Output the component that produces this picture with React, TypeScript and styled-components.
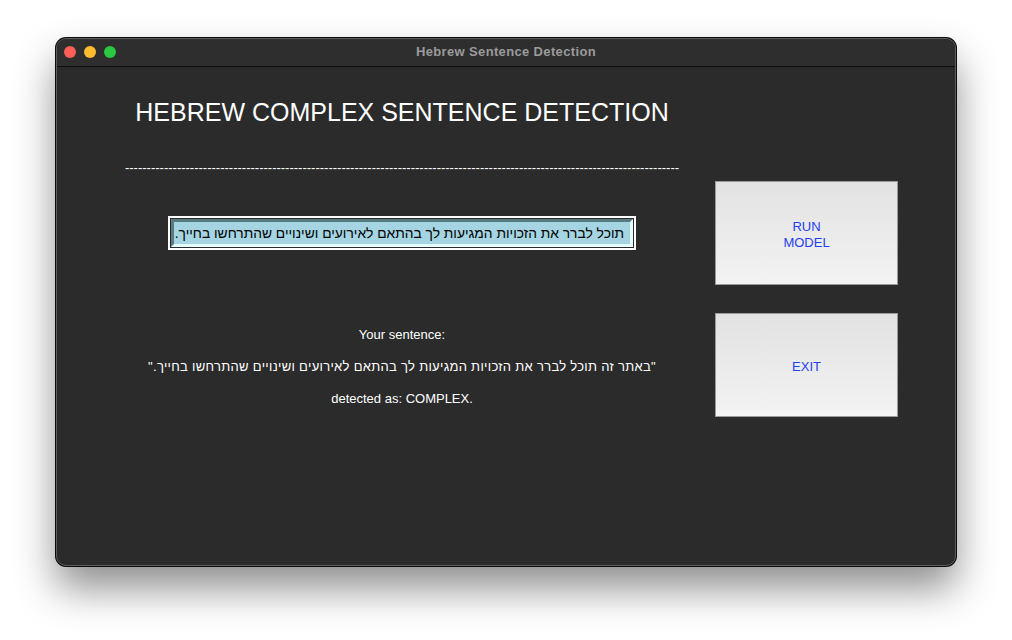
import React from "react";
import styled, { createGlobalStyle } from "styled-components";

const Global = createGlobalStyle`
  html, body { margin: 0; padding: 0; background: #ffffff; }
  body { font-family: "Liberation Sans", Arial, sans-serif; }
`;

const Page = styled.div`
  width: 1012px;
  height: 640px;
  box-sizing: border-box;
  padding: 38px 0 0 56px;
  background: #ffffff;
  overflow: hidden;
`;

const Window = styled.div`
  width: 900px;
  height: 528px;
  box-sizing: border-box;
  border-radius: 10px;
  background: #2b2b2b;
  border: 1px solid #5e5e5e;
  box-shadow: 0 0 0 1px #0a0a0a, 0 22px 40px rgba(0, 0, 0, 0.45);
  display: flex;
  flex-direction: column;
  overflow: hidden;
`;

const TitleBar = styled.div`
  height: 28px;
  box-sizing: border-box;
  padding-bottom: 3px;
  flex: none;
  background: #2e2e2e;
  border-bottom: 1px solid #0d0d0d;
  display: grid;
  grid-template-columns: 80px 1fr 80px;
  align-items: center;
`;

const Lights = styled.div`
  display: flex;
  gap: 8px;
  padding-left: 7px;
  padding-top: 2px;
`;

const Light = styled.span<{ $c: string }>`
  width: 12px;
  height: 12px;
  border-radius: 50%;
  background: ${(p) => p.$c};
`;

const TitleText = styled.div`
  text-align: center;
  color: #9b9b9b;
  font-weight: bold;
  font-size: 13px;
  letter-spacing: 0.35px;
`;

const Body = styled.div`
  flex: 1;
  display: grid;
  grid-template-columns: 600px 183px;
  column-gap: 13px;
  padding-left: 45px;
`;

const Main = styled.div`
  display: flex;
  flex-direction: column;
  align-items: center;
  padding-top: 31px;
`;

const Heading = styled.div`
  color: #ffffff;
  font-size: 25px;
  line-height: 28px;
  white-space: nowrap;
`;

const Rule = styled.div`
  margin-top: 34px;
  color: #ffffff;
  font-size: 13px;
  line-height: 16px;
  white-space: nowrap;
`;

const EntryFrame = styled.div`
  margin-top: 40px;
  width: 468px;
  height: 34px;
  box-sizing: border-box;
  border: 2px solid #ffffff;
  background: #2b2b2b;
  padding: 1px;
  display: flex;
`;

const EntryField = styled.div`
  flex: 1;
  min-width: 0;
  box-sizing: border-box;
  border-style: solid;
  border-width: 3px;
  border-color: #587a80 #e6ffff #e6ffff #587a80;
  background: #a5d5e2;
  direction: rtl;
  color: #000000;
  font-size: 13.8px;
  line-height: 20px;
  padding: 2px 6px 0 2px;
  white-space: nowrap;
  overflow: hidden;
`;

const Result = styled.div`
  margin-top: 69px;
  display: flex;
  flex-direction: column;
  align-items: center;
`;

const ResultLine = styled.div<{ $rtl?: boolean }>`
  color: #ffffff;
  font-size: 13px;
  line-height: 32px;
  white-space: nowrap;
  direction: ${(p) => (p.$rtl ? "rtl" : "ltr")};
  letter-spacing: ${(p) => (p.$rtl ? "0.3px" : "0")};
`;

const Side = styled.div`
  display: flex;
  flex-direction: column;
  gap: 28px;
  padding-top: 114px;
`;

const Button = styled.button`
  width: 183px;
  height: 104px;
  box-sizing: border-box;
  border: 1px solid #9a9a9a;
  background: linear-gradient(#e2e2e2, #f3f3f3);
  color: #1f3ff0;
  font-family: "Liberation Sans", Arial, sans-serif;
  font-size: 13px;
  line-height: 16px;
  padding: 4px 0 0 0;
  display: flex;
  align-items: center;
  justify-content: center;
  text-align: center;
`;

export default function App() {
  return (
    <Page>
      <Global />
      <Window>
        <TitleBar>
          <Lights>
            <Light $c="#fe5f57" />
            <Light $c="#febc2e" />
            <Light $c="#28c840" />
          </Lights>
          <TitleText>Hebrew Sentence Detection</TitleText>
          <span />
        </TitleBar>
        <Body>
          <Main>
            <Heading>HEBREW COMPLEX SENTENCE DETECTION</Heading>
            <Rule>{"-".repeat(128)}</Rule>
            <EntryFrame>
              <EntryField>
                תוכל לברר את הזכויות המגיעות לך בהתאם לאירועים ושינויים שהתרחשו בחייך.
              </EntryField>
            </EntryFrame>
            <Result>
              <ResultLine>Your sentence:</ResultLine>
              <ResultLine $rtl>
                "באתר זה תוכל לברר את הזכויות המגיעות לך בהתאם לאירועים ושינויים שהתרחשו בחייך."
              </ResultLine>
              <ResultLine>detected as: COMPLEX.</ResultLine>
            </Result>
          </Main>
          <Side>
            <Button>
              RUN
              <br />
              MODEL
            </Button>
            <Button>EXIT</Button>
          </Side>
        </Body>
      </Window>
    </Page>
  );
}
